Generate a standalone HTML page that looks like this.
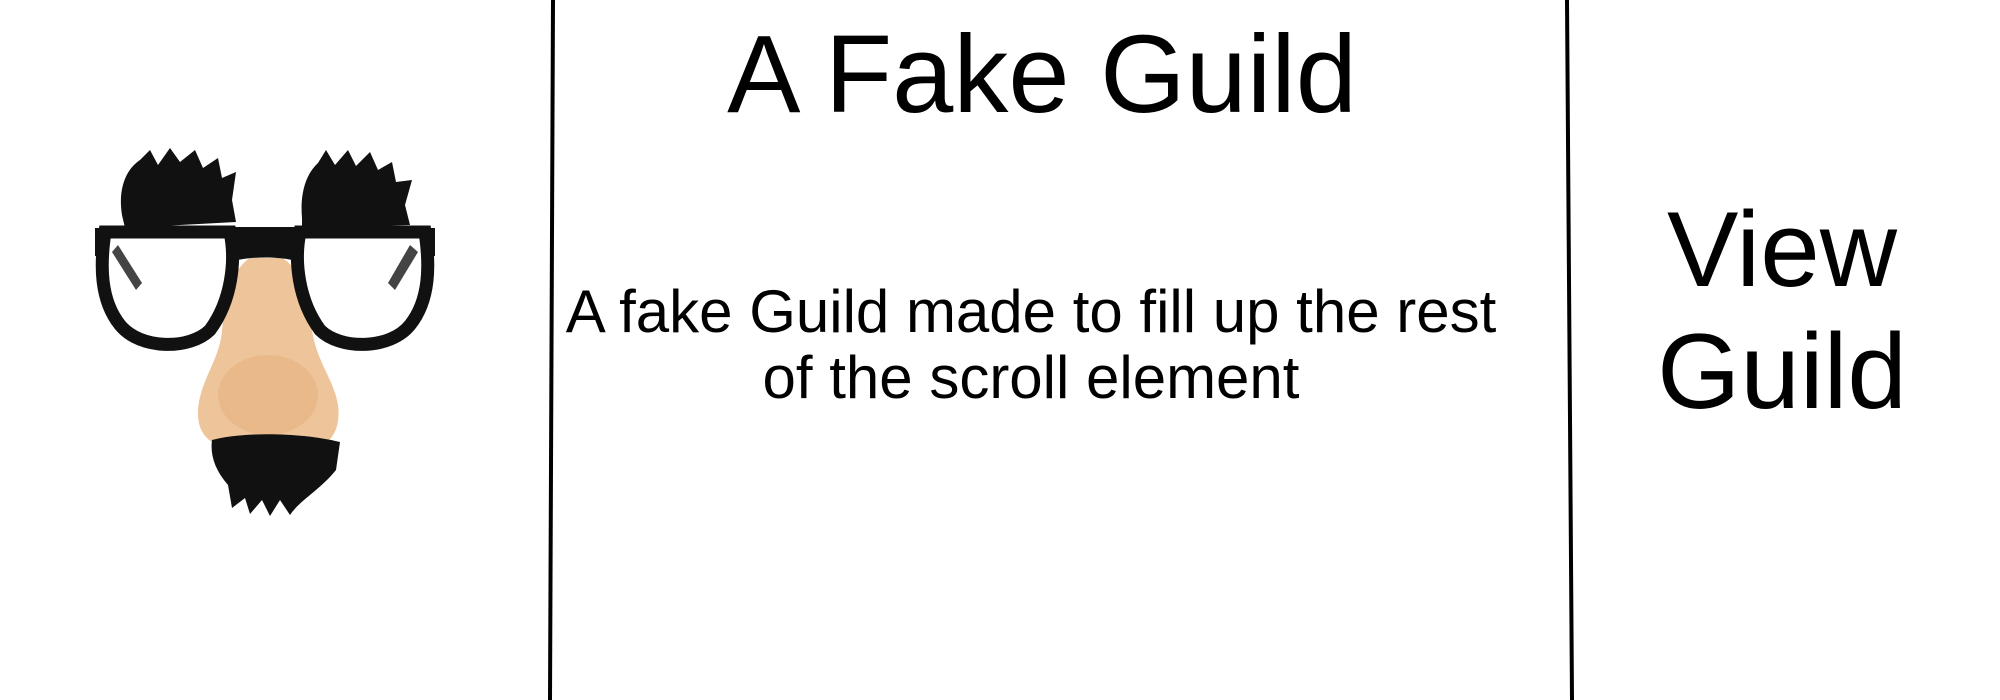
<!DOCTYPE html>
<html><head><meta charset="utf-8"><style>
html,body{margin:0;padding:0;background:#fff;width:2000px;height:700px;overflow:hidden;font-family:"Liberation Sans",Arial,sans-serif;color:#000}
.t{position:absolute;white-space:nowrap;text-align:center}
</style></head><body>
<svg width="2000" height="700" style="position:absolute;left:0;top:0">
  <line x1="553" y1="0" x2="550" y2="700" stroke="#000" stroke-width="4"/>
  <line x1="1567" y1="0" x2="1572" y2="700" stroke="#000" stroke-width="4"/>
  <!-- eyebrows -->
  <g fill="#111">
    <path d="M122 215 C118 190 125 170 140 160 L150 150 L158 165 L170 148 L180 162 L195 150 L203 168 L218 158 L222 178 L236 172 L232 200 L236 222 L125 228 Z"/>
    <path d="M302 218 C300 195 305 175 318 163 L326 150 L335 165 L348 150 L356 166 L370 152 L378 170 L392 162 L396 182 L412 180 L405 205 L410 225 L302 228 Z"/>
  </g>
  <!-- temples -->
  <path d="M118 245 L142 283 L136 290 L112 252 Z" fill="#444"/>
  <path d="M410 245 L388 283 L395 290 L418 252 Z" fill="#444"/>
  <!-- nose -->
  <path d="M250 258 C236 266 226 290 222 330 C220 360 200 380 198 410 C196 440 220 452 245 447 C260 440 282 440 300 448 C325 452 342 435 338 405 C334 380 316 360 312 330 C308 295 298 266 282 258 Z" fill="#eec49a"/>
  <ellipse cx="268" cy="395" rx="50" ry="40" fill="#e8b27e" opacity="0.6"/>
  <!-- glasses frame -->
  <g fill="none" stroke="#111" stroke-width="13">
    <path d="M105 232 L230 232 C236 260 232 300 210 330 C190 350 140 350 120 325 C100 300 100 265 105 232 Z"/>
    <path d="M300 232 L425 232 C430 265 430 300 410 325 C390 350 340 350 320 330 C298 300 294 260 300 232 Z"/>
  </g>
  <rect x="95" y="228" width="14" height="28" fill="#111"/>
  <rect x="421" y="228" width="14" height="28" fill="#111"/>
  <path d="M228 227 L302 227 L298 262 C285 256 245 256 232 262 Z" fill="#111"/>
  <!-- mustache -->
  <path d="M212 440 C240 432 300 432 340 442 L336 470 C320 490 300 500 290 515 L280 500 L270 516 L262 500 L250 514 L245 498 L232 508 L228 485 C215 470 210 455 212 440 Z" fill="#111"/>
</svg>
<div class="t" style="left:542px;width:1000px;top:12px;font-size:110px;line-height:126px">A Fake Guild</div>
<div class="t" style="left:531px;width:1000px;top:279px;font-size:60px;line-height:66px">A fake Guild made to fill up the rest<br>of the scroll element</div>
<div class="t" style="left:1582px;width:400px;top:188px;font-size:107px;line-height:122px">View<br>Guild</div>
</body></html>
